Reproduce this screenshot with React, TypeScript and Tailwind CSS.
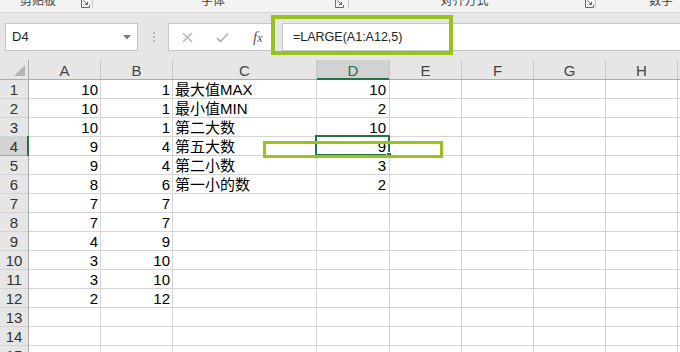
import React from 'react';

const colA = [10, 10, 10, 9, 9, 8, 7, 7, 4, 3, 3, 2];
const colB = [1, 1, 1, 4, 4, 6, 7, 7, 9, 10, 10, 12];
const colC = ['最大值MAX', '最小值MIN', '第二大数', '第五大数', '第二小数', '第一小的数'];
const colD = [10, 2, 10, 9, 3, 2];

const FONT = "font-['Liberation_Sans','Noto_Sans_CJK_SC',sans-serif]";

function Launcher() {
  return (
    <svg width="9" height="9" viewBox="0 0 9 9" className="shrink-0 -mt-[1px]">
      <path d="M0.5 0 V8.5 H8.5 V6" fill="none" stroke="#6b6b6b" strokeWidth="1" />
      <path d="M2.5 1.5 L6.5 5.5 M6.5 2.8 V5.5 H3.8" fill="none" stroke="#6b6b6b" strokeWidth="1" />
    </svg>
  );
}

function RibbonStrip() {
  return (
    <div className="flex h-[12px] overflow-hidden bg-[#f3f3f3] text-[12px] leading-[12px] text-[#444]">
      <div className="flex w-[93px] shrink-0 items-start">
        <div className="w-[76px] -mt-[5px] text-center">剪贴板</div>
        <div className="ml-[5px]"><Launcher /></div>
        <div className="ml-[2px] h-[8px] w-px bg-[#c8c8c8]" />
      </div>
      <div className="flex w-[256px] shrink-0 items-start">
        <div className="w-[240px] -mt-[5px] text-center">字体</div>
        <div className="ml-[2px]"><Launcher /></div>
        <div className="ml-[4px] h-[8px] w-px bg-[#c8c8c8]" />
      </div>
      <div className="flex w-[247px] shrink-0 items-start">
        <div className="w-[231px] -mt-[5px] text-center">对齐方式</div>
        <div className="ml-[5px]"><Launcher /></div>
        <div className="ml-[1px] h-[8px] w-px bg-[#c8c8c8]" />
      </div>
      <div className="w-[130px] shrink-0 -mt-[5px] text-center">数字</div>
    </div>
  );
}

function FormulaBar() {
  return (
    <div className="flex h-[48px] items-start border-t border-[#d5d5d5] bg-[#e6e6e6] pt-[10px]">
      <div className="ml-[5px] flex h-[28px] w-[133px] items-center justify-between border border-[#c6c6c6] bg-white pl-[6px] pr-[6px] text-[13px] text-[#222]">
        <span>D4</span>
        <svg width="8" height="5" viewBox="0 0 8 5">
          <path d="M0 0 H8 L4 4.5 Z" fill="#7a7a7a" />
        </svg>
      </div>
      <div className="ml-[14px] flex h-[28px] w-[4px] flex-col items-center justify-center gap-[2px]">
        <div className="h-[2px] w-[2px] bg-[#b9b9b9]" />
        <div className="h-[2px] w-[2px] bg-[#b9b9b9]" />
        <div className="h-[2px] w-[2px] bg-[#b9b9b9]" />
      </div>
      <div className="ml-[12px] flex h-[28px] w-[105px] items-center border border-[#c6c6c6] bg-white">
        <svg width="11" height="11" viewBox="0 0 11 11" className="ml-[13px]">
          <path d="M1 1 L10 10 M10 1 L1 10" stroke="#b3b3b3" strokeWidth="1.3" fill="none" />
        </svg>
        <svg width="13" height="11" viewBox="0 0 13 11" className="ml-[23px]">
          <path d="M1 6 L4.5 9.5 L12 1.5" stroke="#b3b3b3" strokeWidth="1.8" fill="none" />
        </svg>
        <span className="ml-[24px] font-['Liberation_Serif',serif] text-[15px] italic text-[#555]">
          f<span className="text-[12px]">x</span>
        </span>
      </div>
      <div className="ml-[9px] flex h-[28px] flex-1 items-center border border-r-0 border-[#c6c6c6] bg-white pl-[10px] text-[12.5px] text-[#222]">
        =LARGE(A1:A12,5)
      </div>
    </div>
  );
}

const widths = ['w-[72px]', 'w-[72px]', 'w-[144px]', 'w-[73px]', 'w-[72px]', 'w-[72px]', 'w-[72px]', 'w-[72px]'];
const letters = ['A', 'B', 'C', 'D', 'E', 'F', 'G', 'H'];

function ColumnHeaders() {
  return (
    <div className="flex h-[20px] shrink-0 border-b border-[#ababab] bg-[#e6e6e6] text-[15px] leading-[19px] text-[#444]">
      <div className="relative w-[29px] shrink-0 border-r border-[#ababab]">
        <svg width="11" height="11" viewBox="0 0 11 11" className="absolute bottom-[3px] right-[3px]">
          <path d="M11 0 V11 H0 Z" fill="#b5b5b5" />
        </svg>
      </div>
      {letters.map((l, i) => (
        <div
          key={l}
          className={`${widths[i]} shrink-0 border-r border-[#c8c8c8] pt-[1px] text-center ${
            l === 'D' ? 'relative bg-[#d2d2d2] text-[#217346]' : ''
          }`}
        >
          {l}
          {l === 'D' && <div className="absolute bottom-[-1px] left-0 right-0 h-[2px] bg-[#217346]" />}
        </div>
      ))}
      <div className="flex-1" />
    </div>
  );
}

function Row({ n }: { n: number }) {
  const i = n - 1;
  const sel = n === 4;
  return (
    <div className="flex h-[19px] shrink-0 text-[15px] leading-[18px]">
      <div
        className={`relative w-[29px] shrink-0 border-b border-r pt-[1px] text-center text-[#333] ${
          sel ? 'border-[#ababab] bg-[#d2d2d2]' : 'border-[#d4d4d4] bg-[#e6e6e6]'
        }`}
      >
        {n}
        <div className={`absolute -right-px top-0 h-[19px] w-px ${sel ? 'bg-[#217346]' : 'bg-[#ababab]'}`} />
        {sel && <div className="absolute -right-px -top-px h-[20px] w-[2px] bg-[#217346]" />}
      </div>
      <div className="w-[72px] shrink-0 border-b border-r border-[#d4d4d4] pr-[2px] pt-[1px] text-right">{colA[i] ?? ''}</div>
      <div className="w-[72px] shrink-0 border-b border-r border-[#d4d4d4] pr-[2px] pt-[1px] text-right">{colB[i] ?? ''}</div>
      <div className="w-[144px] shrink-0 whitespace-nowrap border-b border-r border-[#d4d4d4] pl-[2px] pt-[1px]">{colC[i] ?? ''}</div>
      <div className="relative w-[73px] shrink-0 border-b border-r border-[#d4d4d4] pr-[3px] pt-[1px] text-right">
        {colD[i] ?? ''}
        {sel && (
          <>
            <div className="absolute -left-[2px] -top-[2px] bottom-[-1px] right-[-1px] border-2 border-[#217346]" />
            <div className="absolute bottom-[-3px] right-[-3px] h-[6px] w-[6px] border border-white bg-[#217346]" />
          </>
        )}
      </div>
      {[0, 1, 2, 3].map((k) => (
        <div key={k} className="w-[72px] shrink-0 border-b border-r border-[#d4d4d4]" />
      ))}
      <div className="flex-1 border-b border-[#d4d4d4]" />
    </div>
  );
}

export default function App() {
  return (
    <div className={`relative h-[352px] w-[680px] overflow-hidden bg-white text-black ${FONT}`}>
      <RibbonStrip />
      <FormulaBar />
      <ColumnHeaders />
      {Array.from({ length: 15 }, (_, k) => (
        <Row key={k} n={k + 1} />
      ))}

      {/* Annotation highlights */}
      <div className="pointer-events-none absolute left-[271px] top-[15px] h-[40px] w-[182px] border-4 border-[#98c21c]" />
      <div className="pointer-events-none absolute left-[263px] top-[141px] h-[17px] w-[180px] border-[3px] border-[#98c21c]" />
    </div>
  );
}
